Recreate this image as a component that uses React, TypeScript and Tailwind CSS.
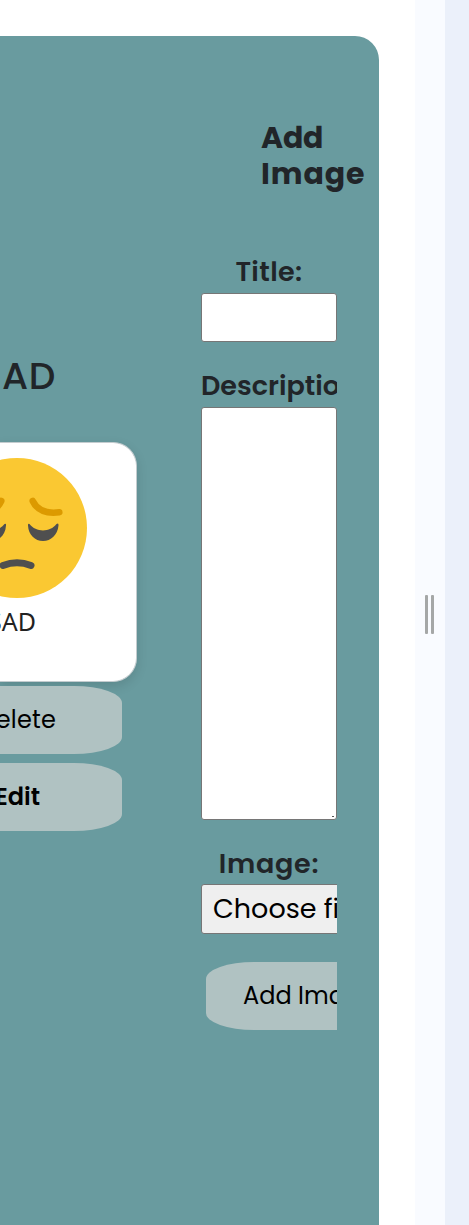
const font =
  "font-['Poppins','Inter',sans-serif] [font-feature-settings:'cv11','cv08'] whitespace-nowrap";

function PensiveFace() {
  return (
    <svg width="87" height="140" viewBox="0 0 87 140" className="block" fill="none">
      <circle cx="17" cy="70" r="70" fill="#fac832" />
      <path d="M32.700 43C37 52 46 56 59.300 54.300" stroke="#dc9a00" strokeWidth="6.500" strokeLinecap="round" />
      <path d="M1.300 43C-3 52 -12 56 -25.300 54.300" stroke="#dc9a00" strokeWidth="6.500" strokeLinecap="round" />
      <path d="M28 67.500Q27.700 65 29.500 66C36 74.500 50 74.500 56.500 66Q58.800 64.500 58.500 67.500C57.500 77 51 83 43 83S28.500 77 28 67.500Z" fill="#4f4f4f" />
      <path d="M6 67.500Q6.300 65 4.500 66C-2 74.500 -16 74.500 -22.500 66Q-24.800 64.500 -24.500 67.500C-23.500 77 -17 83 -9 83S5.500 77 6 67.500Z" fill="#4f4f4f" />
      <path d="M3 107.500Q17 102 31 107.500" stroke="#4f4f4f" strokeWidth="7" strokeLinecap="round" />
    </svg>
  );
}

function Gallery() {
  return (
    <section className="w-[201px] shrink-0 pt-[311px]">
      <h2 className={`${font} flex h-[60px] w-[56px] items-center justify-end overflow-hidden text-[37.5px] font-medium leading-none tracking-[0.7px] text-[#212529]`}>
        AD
      </h2>
      <div className="mt-[35px] h-[240px] w-[137px] rounded-r-[24px] border-y border-r border-[#c4cccf] bg-white pt-[15px] shadow-[0_4px_12px_rgba(0,0,0,0.12)]">
        <PensiveFace />
        <p className="mt-[6px] flex h-[34px] w-[36px] items-center justify-end overflow-hidden whitespace-nowrap font-['Noto_Sans',sans-serif] text-[25px] leading-none text-[#222]">
          SAD
        </p>
      </div>
      <button className={`${font} mt-[4px] flex h-[68px] w-[122px] items-center justify-end overflow-hidden bg-[#b0c2c2] pr-[66px] text-[24px] leading-none tracking-[0.2px] text-black [border-radius:0_48px_48px_0/0_17px_17px_0]`}>
        Delete
      </button>
      <button className={`${font} mt-[9px] flex h-[68px] w-[122px] items-center justify-end overflow-hidden bg-[#b0c2c2] pr-[82px] text-[24px] font-semibold leading-none text-black [border-radius:0_48px_48px_0/0_17px_17px_0]`}>
        Edit
      </button>
    </section>
  );
}

function ImageForm() {
  return (
    <section className="w-[178px] shrink-0 pt-[84px]">
      <h2 className={`${font} ml-[60px] text-[30px] font-bold leading-[36px] text-[#212529]`}>
        <span className="block tracking-[-0.2px]">Add</span>
        <span className="block tracking-[0.9px]">Image</span>
      </h2>
      <form className="mt-[60px] flex w-[136px] flex-col overflow-hidden">
        <label className={`${font} h-[41px] pt-[2px] text-center text-[27px] font-semibold leading-[36px] tracking-[0.4px] text-[#212529]`}>
          Title:
        </label>
        <input className="h-[49px] w-[136px] rounded-[3px] border border-[#767676] bg-white outline-none" />
        <label className={`${font} mt-[29px] h-[36px] text-[27px] font-semibold leading-[30px] text-[#212529]`}>
          Description:
        </label>
        <div className="relative h-[413px] w-[136px]">
          <textarea className="block h-full w-full resize-none rounded-[3px] border border-[#767676] bg-white outline-none" />
          <span className="absolute bottom-[3px] right-[3px] h-px w-[2px] bg-[#555]" />
        </div>
        <label className={`${font} mt-[26px] h-[38px] text-center text-[27px] font-semibold leading-[36px] tracking-[0.7px] text-[#212529]`}>
          Image:
        </label>
        <button type="button" className={`${font} h-[50px] w-[176px] shrink-0 rounded-[3px] border border-[#767676] bg-[#efefef] pb-[2px] pl-[11px] text-left text-[27px] leading-none text-black`}>
          Choose file
        </button>
        <button type="button" className={`${font} ml-[5px] mt-[28px] h-[68px] w-[214px] shrink-0 bg-[#b0c2c2] pl-[37px] text-left text-[24px] leading-none text-black [border-radius:48px/17px]`}>
          Add Image
        </button>
      </form>
    </section>
  );
}

export default function App() {
  return (
    <div className="flex h-[1225px] w-[469px] overflow-hidden bg-white">
      <main className="w-[415px] shrink-0 pt-[36px]">
        <div className="flex h-[1189px] w-[379px] overflow-hidden rounded-tr-[24px] bg-[#699b9f]">
          <Gallery />
          <ImageForm />
        </div>
      </main>
      <div className="flex w-[30px] shrink-0 gap-[3px] bg-[#f9fbff] pl-[10px] pt-[595px]">
        <span className="h-[39px] w-[3px] rounded-[1px] bg-[#a5a7a7]" />
        <span className="h-[39px] w-[3px] rounded-[1px] bg-[#a5a7a7]" />
      </div>
      <aside className="flex-1 bg-[#ebf0fa]" />
    </div>
  );
}
